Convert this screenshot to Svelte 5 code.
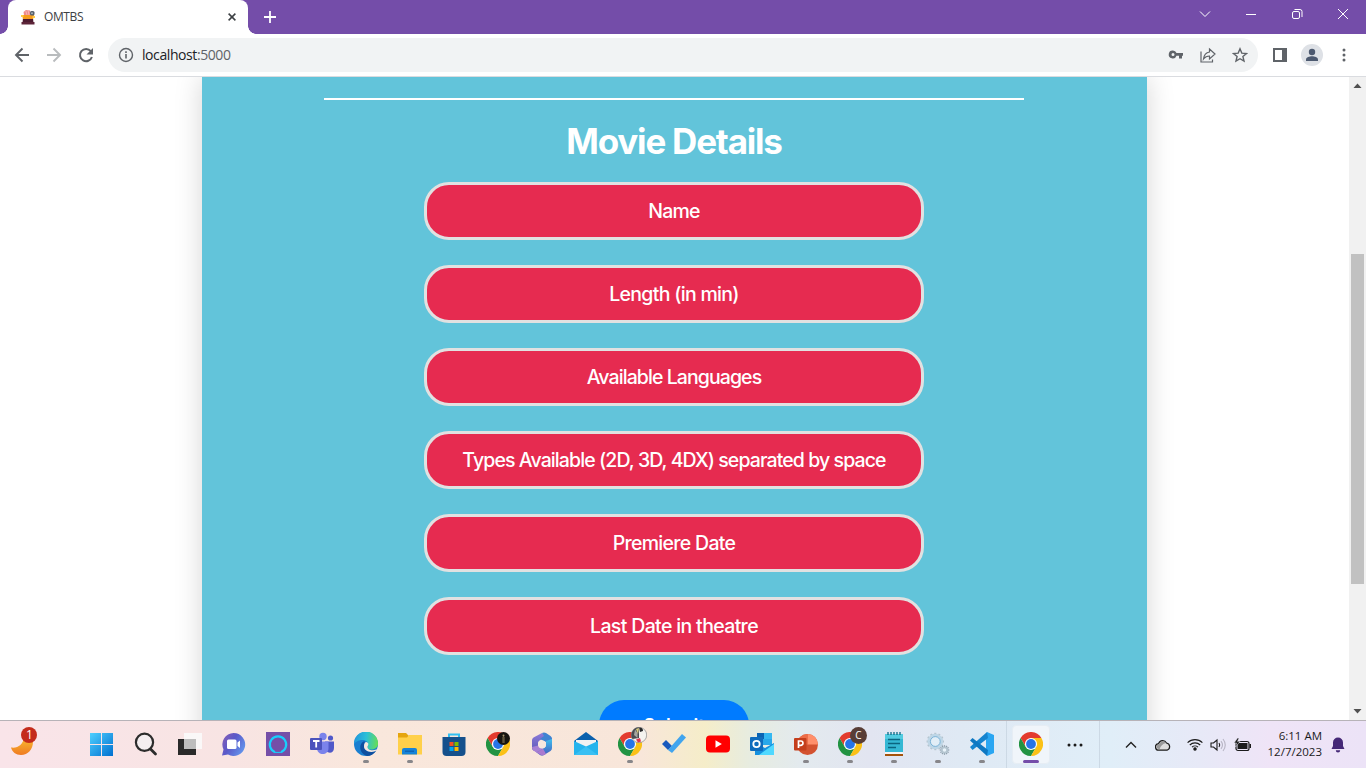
<script>
  const fields = [
    { label: 'Name', spacing: -0.8 },
    { label: 'Length (in min)', spacing: -0.7 },
    { label: 'Available Languages', spacing: -0.92 },
    { label: 'Types Available (2D, 3D, 4DX) separated by space', spacing: -0.9 },
    { label: 'Premiere Date', spacing: -0.7 },
    { label: 'Last Date in theatre', spacing: -0.65 }
  ];
  const apps = [
    { id: 'start' }, { id: 'search' }, { id: 'tasks' }, { id: 'chat' }, { id: 'alexa' },
    { id: 'teams' }, { id: 'edge', open: true }, { id: 'files', open: true }, { id: 'store' },
    { id: 'chrome', badge: 'dark' }, { id: 'm365' }, { id: 'mail' },
    { id: 'chrome', badge: 'photo', open: true }, { id: 'todo' }, { id: 'youtube' },
    { id: 'outlook' }, { id: 'ppt', open: true }, { id: 'chrome', badge: 'c', open: true },
    { id: 'notepad', open: true }, { id: 'services', open: true }, { id: 'code', open: true }
  ];
  const teeth = [0, 30, 60, 90, 120, 150, 180, 210, 240, 270, 300, 330];
</script>

{#snippet chromeLogo()}
  <path d="M1.600 6A12 12 0 0 1 22.400 6H12L6.800 15z" fill="#e33b2e" />
  <path d="M1.600 6A12 12 0 0 0 12 24l5.200-9L12 12l-5.200 3z" fill="#229342" />
  <path d="M12 24A12 12 0 0 0 22.400 6H12l5.200 9z" fill="#fbc116" />
  <circle cx="12" cy="12" r="6.100" fill="#fff" />
  <circle cx="12" cy="12" r="4.900" fill="#2674e8" />
{/snippet}

<div class="screen">
  <header class="tabs">
    <div class="tab">
      <svg width="16" height="16" viewBox="0 0 16 16">
        <path d="M3 9h10l.5 5h-11z" fill="#4d1b30" />
        <path d="M1.500 13h13v2.500h-13z" fill="#5d2438" />
        <path d="M2 6h12l-1 4H3z" fill="#f79b1c" />
        <path d="M1 6h2.500v2H1zM12.500 7H15v2h-2.500z" fill="#ffcc43" />
        <path d="M3.500 3 6 1l4 .5 1 4.500H4z" fill="#ef8a8c" />
        <path d="M5.500 1 7 6M8 1l1 5" stroke="#f6b5b3" />
        <rect x="10" y="2" width="4.500" height="4.500" rx="1.500" fill="#58616b" /><circle cx="12" cy="4.200" r="1" fill="#a6b0b8" />
      </svg>
      <span>OMTBS</span>
      <svg class="close" width="8" height="8" viewBox="0 0 8 8"><path d="M.6.6 7.400 7.400M7.400.6.6 7.400" stroke="#3c4043" stroke-width="1.500" /></svg>
    </div>
    <svg class="plus" width="12" height="12" viewBox="0 0 12 12"><path d="M6 0v12M0 6h12" stroke="#fff" stroke-width="1.800" /></svg>
    <div class="win">
      <svg width="46" height="28" viewBox="0 0 46 28"><path d="M18 11.500l5 5 5-5" /></svg>
      <svg width="46" height="28" viewBox="0 0 46 28"><path d="M18 14.500h10" /></svg>
      <svg width="46" height="28" viewBox="0 0 46 28"><rect x="18.500" y="11.500" width="7" height="7" rx="1.500" /><path d="M20.500 9.500h5.500a2 2 0 0 1 2 2v5.500" /></svg>
      <svg width="46" height="28" viewBox="0 0 46 28"><path d="M18 9l10 10M28 9 18 19" /></svg>
    </div>
  </header>

  <div class="toolbar">
    <svg width="32" height="32" viewBox="0 0 32 32" fill="none" stroke="#5f6368" stroke-width="1.900"><path d="M23 16H10.500M16.500 9.500 10 16l6.500 6.500" /></svg>
    <svg width="32" height="32" viewBox="0 0 32 32" fill="none" stroke="#b9bcbe" stroke-width="1.900"><path d="M9 16h12.500M15.500 9.500 22 16l-6.500 6.500" /></svg>
    <svg width="32" height="32" viewBox="0 0 32 32" fill="none" stroke="#5f6368" stroke-width="2"><path d="M20.800 12.200A6.100 6.100 0 1 0 21.900 18" /><path d="M23 9v6.500h-6.500z" fill="#5f6368" stroke="none" /></svg>
    <div class="omnibox">
      <svg width="16" height="16" viewBox="0 0 16 16"><circle cx="8" cy="8" r="6.500" fill="none" stroke="#5f6368" stroke-width="1.400" /><path d="M7.200 7h1.600v4.500H7.200zM7.200 4.300h1.600v1.600H7.200z" fill="#5f6368" /></svg>
      <span class="url">localhost<i>:5000</i></span>
      <div class="actions">
        <svg width="16" height="16" viewBox="0 0 16 16"><path fill-rule="evenodd" d="M5 3.500a4 4 0 1 0 3.500 5.300H11V11.500h3V8.800h1V6H8.500A4 4 0 0 0 5 3.500zM5 6a1.500 1.500 0 1 1 0 3 1.500 1.500 0 0 1 0-3z" fill="#5f6368" /></svg>
        <svg width="16" height="16" viewBox="0 0 16 16" fill="none" stroke="#5f6368" stroke-width="1.200"><path d="M1 4.500V15h11.500v-2.500" /><path d="M9.500 2 15 7l-5.500 5V9C6.500 9 5 10 3.500 12 4 8 6 5.500 9.500 5z" /></svg>
        <svg width="16" height="16" viewBox="0 0 16 16"><path d="M8 1.800l1.800 4.300 4.700.4-3.600 3 1.100 4.600L8 11.700l-4 2.400 1.100-4.600-3.600-3 4.700-.4z" fill="none" stroke="#5f6368" stroke-width="1.400" /></svg>
      </div>
    </div>
    <div class="menu">
      <svg width="14" height="14" viewBox="0 0 14 14"><path fill-rule="evenodd" d="M0 0h14v14H0zM2 2v10h7V2z" fill="#5f6368" /></svg>
      <svg width="22" height="22" viewBox="0 0 22 22"><circle cx="11" cy="11" r="11" fill="#dee1e6" /><circle cx="11" cy="8" r="3.200" fill="#4d5a70" /><path d="M5 17v-1.500c0-2 3.500-3.200 6-3.200s6 1.200 6 3.200V17z" fill="#4d5a70" /></svg>
      <svg width="4" height="14" viewBox="0 0 4 14" fill="#5f6368"><circle cx="2" cy="2" r="1.500" /><circle cx="2" cy="7" r="1.500" /><circle cx="2" cy="12" r="1.500" /></svg>
    </div>
  </div>

  <div class="viewport">
    <main class="card">
      <hr />
      <h1>Movie Details</h1>
      <form>
        {#each fields as f}
          <div class="field"><span style="letter-spacing: {f.spacing}px">{f.label}</span></div>
        {/each}
      </form>
      <button type="button">Submit</button>
    </main>
    <div class="scroll">
      <svg width="17" height="17" viewBox="0 0 17 17"><path d="M4.500 11h8l-4-4.500z" fill="#505050" /></svg>
      <div class="thumb"></div>
      <svg width="17" height="17" viewBox="0 0 17 17"><path d="M4.500 6h8l-4 4.500z" fill="#505050" /></svg>
    </div>
  </div>

  <footer class="taskbar">
    <div class="weather">
      <svg width="30" height="30" viewBox="0 0 30 30">
        <defs><linearGradient id="moon" x1="0" y1="0" x2="0" y2="1"><stop offset="0" stop-color="#f9bd30" /><stop offset="1" stop-color="#ef7b22" /></linearGradient></defs>
        <path d="M1 20.500c7 1 12-3 13-10 2-1 8 0 9 4 0 8-5 13.500-12 13.500-5 0-9-3-10-7.500z" fill="url(#moon)" />
        <circle cx="19" cy="8" r="8" fill="#c42b1c" />
      </svg>
      <b>1</b>
    </div>
    <div class="apps">
      {#each apps as a}
        <div class="app" class:open={a.open}>
          <svg width="24" height="24" viewBox="0 0 24 24">
            {#if a.id === 'start'}
              <defs><linearGradient id="win" gradientUnits="userSpaceOnUse" x1="0" y1="1" x2="23" y2="24"><stop offset="0" stop-color="#4fd0ff" /><stop offset="1" stop-color="#0070d0" /></linearGradient></defs>
              <path d="M0 1h11v11H0zM12 1h11v11H12zM0 13h11v11H0zM12 13h11v11H12z" fill="url(#win)" />
            {:else if a.id === 'search'}
              <circle cx="10.500" cy="10.300" r="8.600" fill="#f4eef0" stroke="#2c2c2c" stroke-width="2.200" /><path d="M16.500 17l5 5" stroke="#2c2c2c" stroke-width="2.800" stroke-linecap="round" />
            {:else if a.id === 'tasks'}
              <path d="M0 7h18v16H0z" fill="#2a2a2a" /><path d="M6 1h18v16H6z" fill="#fafafa" opacity=".9" /><path d="M6 7h12v10H6z" fill="#bdbdbd" />
            {:else if a.id === 'chat'}
              <defs><linearGradient id="cht" x1="0" y1="0" x2="1" y2=".6"><stop offset="0" stop-color="#8a5fb5" /><stop offset=".5" stop-color="#5a59c9" /><stop offset="1" stop-color="#6291ea" /></linearGradient></defs>
              <path d="M11.500 1A11.500 11.500 0 1 1 6 22.500L0 23.500l1.500-6A11.500 11.500 0 0 1 11.500 1z" fill="url(#cht)" /><rect x="5" y="7.500" width="9.500" height="9.500" rx="1.500" fill="#fff" /><path d="M15.500 10.500 18 8.500v7.500l-2.500-2z" fill="#fff" />
            {:else if a.id === 'alexa'}
              <path d="M0 0h24v24H0z" fill="#754fa8" /><path d="M9 20.200A8.200 8.200 0 1 1 15 20.200" fill="none" stroke="#18cffc" stroke-width="2.200" /><path d="M9 20.400h6" stroke="#18cffc" fill="none" />
            {:else if a.id === 'teams'}
              <circle cx="13" cy="4.500" r="3.700" fill="#7b83eb" /><circle cx="20.500" cy="6" r="2.600" fill="#5059c9" /><path d="M15 9.500h9V16c0 5-5 6-8 3z" fill="#5059c9" /><path d="M7 9.500h11.500V16c0 8-11.500 8-11.500 0z" fill="#7b83eb" /><rect y="6" width="12" height="12" rx="1" fill="#4b53bc" /><path d="M3 9h6.500M6.200 9v6.500" stroke="#fff" stroke-width="1.800" />
            {:else if a.id === 'edge'}
              <defs>
                <linearGradient id="ed" x1="0" y1=".3" x2="1" y2=".4"><stop offset="0" stop-color="#2196dc" /><stop offset=".5" stop-color="#2bbfd8" /><stop offset="1" stop-color="#66dd58" /></linearGradient>
              </defs>
              <circle cx="12" cy="12" r="12" fill="#1a7fd0" />
              <path d="M0 12A12 12 0 0 1 24 11c.5 4-3 6.500-7 6.500-3 0-4.500-1.500-3.500-3C15.500 11 12.500 8 8.500 8 4 8 1 10.500 0 12z" fill="url(#ed)" />
              <path d="M10.500 9C4 11 5 22 13 23.900c3.500 0 7-2 9-5C15 22 9 18 10.500 13z" fill="#0f4f9f" />
              <path d="M12 10c3 .5 2.700 2.700 1.500 4.500C13 18 18 19.300 22.500 17.500c.5 0 .5.500 0 1C18 21.500 9.500 19.500 10 14c0-2 .8-3.500 2-4z" fill="#f7e8df" />
            {:else if a.id === 'files'}
              <path d="M0 1h8l3 3h13v18H0z" fill="#e5a50f" /><path d="M0 5.500h9L11 3h13v19.500H0z" fill="#ffd04a" /><path d="M4 22.500V18q0-2 2-2h11q2 0 2 2v4.500z" fill="#1683d8" /><path d="M7 18.500h9v1.500H7z" fill="#0f64b5" />
            {:else if a.id === 'store'}
              <path d="M7 6V2.500h10V6" fill="none" stroke="#31bff2" stroke-width="2" /><path d="M.5 5h23v15q0 4-4 4h-15q-4 0-4-4z" fill="#15508c" /><path d="M7.500 10h4v4h-4z" fill="#f25022" /><path d="M12.500 10h4v4h-4z" fill="#7fba00" /><path d="M7.500 15h4v4h-4z" fill="#00a4ef" /><path d="M12.500 15h4v4h-4z" fill="#ffb900" />
            {:else if a.id === 'chrome'}
              {@render chromeLogo()}
            {:else if a.id === 'm365'}
              <defs><linearGradient id="ma" x1="0" y1="0" x2="0" y2="1"><stop offset="0" stop-color="#8d7bd9" /><stop offset="1" stop-color="#5a57b8" /></linearGradient><linearGradient id="mb" x1="0" y1="0" x2="0" y2="1"><stop offset="0" stop-color="#3ec0ee" /><stop offset="1" stop-color="#4659bd" /></linearGradient></defs>
              <path d="M12 1 3.500 5.500Q2 6.500 2 8v8q0 1.500 1.500 2.500L8 20.500V11q0-1.500 1.500-2.500L16 5z" fill="url(#ma)" />
              <path d="M12 1q2-1 4 0l4.500 3q1.500 1 1.500 2.500V13l-6-3-6-3 4-3z" fill="#3f83d2" />
              <path d="M22 7v9q0 2-1.500 3L14 23q-2 1-4 0l-4-3 8.500-4.500Q16 15 16 13V9z" fill="url(#mb)" />
              <path d="M2 15l6-1.500 5 3-6.500 4-3-2Q2 17.500 2 15z" fill="#a780d4" /><path d="M6.500 20.500l6.500-4 3 5.500q-3 2-5 1z" fill="#aa7ad0" />
              <circle cx="12" cy="12.500" r="3.900" fill="#f6e8df" />
            {:else if a.id === 'mail'}
              <path d="M0 9 12 0l12 9v2H0z" fill="#0a60ad" /><path d="M2 8h20v9H2z" fill="#f2f2f2" /><path d="M0 9l12 5.500L24 9v14H0z" fill="#25b4ed" /><path d="M0 23l12-8.500L24 23z" fill="#39c0f3" />
            {:else if a.id === 'todo'}
              <path d="M0 12l4-4 6 6-4 4z" fill="#185abd" /><path d="M6 18 20 2l4 3.500L10 21z" fill="#41a5ee" />
            {:else if a.id === 'youtube'}
              <rect y="3.500" width="24" height="17" rx="4" fill="#f00" /><path d="M9.500 8.200v7.600l6.300-3.800z" fill="#fff" />
            {:else if a.id === 'outlook'}
              <path d="M7 1h15v12H7z" fill="#28a8ea" /><path d="M7 1h7v6H7z" fill="#0a64b4" /><path d="M14 1h8v6h-8z" fill="#35b8f1" /><path d="M5 11l10 5 9-5v12H5z" fill="#1490df" /><path d="M9 23l15-11v11z" fill="#50d9ff" /><rect y="5" width="13" height="14" rx="1" fill="#0f6cbd" /><circle cx="6.500" cy="12" r="3.200" fill="none" stroke="#fff" stroke-width="1.800" />
            {:else if a.id === 'ppt'}
              <circle cx="13.500" cy="12.500" r="10.500" fill="#d35230" /><path d="M13.500 2A10.500 10.500 0 0 1 24 12.500H13.500z" fill="#ff8f6b" /><path d="M3 12.500A10.500 10.500 0 0 1 13.500 2v10.500z" fill="#ed6c47" /><rect y="6" width="12.500" height="12.500" rx="1" fill="#c43e1c" /><path d="M4.500 16V9h2.300a2 2 0 0 1 0 4.300H4.500" fill="none" stroke="#fff" stroke-width="1.700" />
            {:else if a.id === 'notepad'}
              <path d="M3 2h18v19H3z" fill="#35b8d4" /><path d="M3 2h18v5H3z" fill="#53cbe0" /><path d="M6 0v3M9 0v3M12 0v3M15 0v3M18 0v3" stroke="#0b6a85" stroke-width="1.300" /><path d="M6 7.500h12M6 11.500h12M6 15.500h8" stroke="#0b6580" stroke-width="1.500" /><path d="M3 20h18v2H3z" fill="#f5f5f5" /><path d="M3 22h18v2H3z" fill="#a4530b" />
            {:else if a.id === 'services'}
              {#each teeth as t}<path d="M8.300.8h2V4h-2z" fill="#b3c2cc" transform="rotate({t} 9.300 9.500)" />{/each}
              <circle cx="9.300" cy="9.500" r="6.300" fill="none" stroke="#bed6e6" stroke-width="3" /><circle cx="9.300" cy="9.500" r="4.900" fill="#e2eef7" stroke="#62a6d0" stroke-width=".8" />
              {#each teeth as t}<path d="M17.900 13.200h1.200v2h-1.200z" fill="#8d9daa" transform="rotate({t} 18.500 18)" />{/each}
              <circle cx="18.500" cy="18" r="2.700" fill="#e9f3fa" stroke="#b4c5d0" stroke-width="1.800" />
            {:else if a.id === 'code'}
              <path d="M17 0l7 3v18l-7 3-1-5V5z" fill="#2aa6f2" /><path d="M17 0 0 15l2.500 3L18 6z" fill="#1684cf" /><path d="M0 8.500 2.500 6 18 18l-1 6z" fill="#0f78c2" />
            {/if}
          </svg>
          {#if a.badge === 'c'}
            <span class="badge c">C</span>
          {:else if a.badge === 'dark'}
            <svg class="badge dark" width="13" height="13" viewBox="0 0 13 13"><circle cx="6.500" cy="6.500" r="6.500" fill="#17150f" /><path d="M5.300 11V5.500l1.200-2 1.200 2V11z" fill="#5f553c" /><circle cx="6.500" cy="3.600" r="1" fill="#a8966f" /></svg>
          {:else if a.badge === 'photo'}
            <svg class="badge photo" width="16" height="16" viewBox="0 0 16 16"><circle cx="8" cy="8" r="7.700" fill="#f5f3ef" stroke="#77777a" stroke-width=".6" /><path d="M8 .3A7.700 7.700 0 0 0 1.500 12L8 11V6z" fill="#4a4c52" /><path d="M4 2.500 6.500 6v5L3 8z" fill="#a6a5a0" /><path d="M5 2 8 1l-1 6z" fill="#d8ca7c" /><path d="M8 .5Q12 0 12 4L9 5z" fill="#29292b" /><path d="M5 12.500l4-1.500 1 3.500-3 1z" fill="#e03450" /></svg>
          {/if}
        </div>
      {/each}
    </div>
    <div class="group">
      <div class="active"><svg width="24" height="24" viewBox="0 0 24 24">{@render chromeLogo()}</svg></div>
      <svg width="16" height="4" viewBox="0 0 16 4" fill="#1b1b1b"><circle cx="2" cy="2" r="1.500" /><circle cx="8" cy="2" r="1.500" /><circle cx="14" cy="2" r="1.500" /></svg>
    </div>
    <div class="tray">
      <svg class="up" width="12" height="8" viewBox="0 0 12 8"><path d="M1 6.500l5-5 5 5" fill="none" stroke="#222" stroke-width="1.400" /></svg>
      <svg class="cloud" width="16" height="12" viewBox="0 0 16 12"><path d="M4 11.200a3.300 3.300 0 0 1-.4-6.600A4.300 4.300 0 0 1 11.500 4a3.700 3.700 0 0 1 .5 7.200z" fill="#ddd" stroke="#1b1b1b" stroke-width="1.200" /><path d="M1.500 9Q1 6 4 5.300 7-.5 11 4 6 5 4.500 10.500z" fill="#999" /></svg>
      <svg class="wifi" width="16" height="13" viewBox="0 0 16 13" fill="none" stroke="#1b1b1b" stroke-width="1.100"><path d="M.6 4.700a10.500 10.500 0 0 1 14.800 0M2.800 7a7.400 7.400 0 0 1 10.400 0M5 9.200a4.300 4.300 0 0 1 6 0" /><circle cx="8" cy="11" r="1.200" fill="#1b1b1b" /></svg>
      <svg class="vol" width="17" height="14" viewBox="0 0 17 14" fill="none" stroke="#1b1b1b" stroke-width="1.100"><path d="M1 5v4h2.500L7 12V2L3.500 5z" /><path d="M9 5q1.500 2 0 4" /><path d="M11 3.200q3 3.800 0 7.600M13 1q4.500 6 0 12" stroke="#b8b5c4" /></svg>
      <svg class="bat" width="18" height="14" viewBox="0 0 18 14"><rect x="2" y="3.500" width="13" height="9" rx="2" fill="none" stroke="#1b1b1b" stroke-width="1.200" /><path d="M3.500 5h10v6h-10zM15.500 6h1.500v4h-1.500z" fill="#1b1b1b" /><path d="M3.500 0 0 5h2.500L1.500 9 6 3.500H3.500L5 0z" fill="#1b1b1b" stroke="#ebe8f6" stroke-width=".5" /></svg>
      <div class="clock"><span>6:11 AM</span><span>12/7/2023</span></div>
      <svg class="bell" width="14" height="16" viewBox="0 0 14 16"><path d="M7 .5a5 5 0 0 1 5 5V9l1.500 3H.5L2 9V5.500a5 5 0 0 1 5-5zM4.800 13.200h4.400a2.200 2.200 0 0 1-4.400 0z" fill="#452877" /></svg>
    </div>
  </footer>
</div>

<style>
  :global(body) { overflow: hidden; }
  .screen { width: 1366px; height: 768px; display: flex; flex-direction: column; background: #fff; overflow: hidden; font-family: "Open Sans", sans-serif; }
  .screen * { box-sizing: border-box; }
  svg { display: block; flex: none; }
  .tabs { height: 34px; flex: none; background: #744da9; display: flex; padding-left: 8px; }
  .tab { width: 240px; height: 34px; background: #fff; border-radius: 8px 8px 0 0; display: flex; align-items: center; padding: 0 12px; position: relative; font-size: 12px; color: #3c4043; }
  .tab::before, .tab::after { content: ""; position: absolute; bottom: 0; width: 8px; height: 8px; }
  .tab::before { left: -8px; background: radial-gradient(circle at 0 0, #744da9 7.500px, #fff 8px); }
  .tab::after { right: -8px; background: radial-gradient(circle at 100% 0, #744da9 7.500px, #fff 8px); }
  .tab span { margin-left: 8px; letter-spacing: -.4px; padding-bottom: 2px; }
  .close { margin-left: auto; }
  .plus { margin: 11px 0 0 16px; }
  .win { display: flex; margin-left: auto; }
  .win path, .win rect { fill: none; stroke: #fff; stroke-width: 1; }
  .toolbar { height: 43px; flex: none; border-bottom: 1px solid #dadce0; display: flex; align-items: center; padding-left: 6px; }
  .omnibox { width: 1150px; height: 34px; margin-left: 6px; border-radius: 17px; background: #f1f3f4; display: flex; align-items: center; padding: 0 10px; }
  .url { margin-left: 8px; padding-bottom: 2px; font-size: 14px; letter-spacing: -.42px; color: #202124; }
  .url i { font-style: normal; color: #5f6368; }
  .actions { margin-left: auto; display: flex; gap: 16px; }
  .menu { display: flex; align-items: center; margin-left: 15px; }
  .menu svg + svg { margin-left: 14px; }
  .menu svg:last-child { margin-left: 19px; }
  .viewport { height: 643px; flex: none; display: flex; overflow: hidden; padding-left: 202px; }
  .card { width: 945px; height: 760px; background: #62c4da; box-shadow: 0 0 26px rgba(0, 0, 0, .17); display: flex; flex-direction: column; align-items: center; padding: 21px 1px 0 0; font-family: Inter, sans-serif; }
  hr { width: 700px; height: 2px; margin: 0; border: 0; background: #fff; flex: none; }
  h1 { margin: 19px 0 0; height: 44px; line-height: 44px; font-size: 35px; font-weight: 700; letter-spacing: -1.200px; color: #fff; }
  form { margin-top: 19px; display: flex; flex-direction: column; gap: 25px; }
  .field { width: 500px; height: 58px; border: 3px solid #e1e1e1; border-radius: 25px; background: #e62b50; color: #fff; font-size: 19.500px; font-weight: 500; display: flex; align-items: center; justify-content: center; white-space: nowrap; }
  button { margin-top: 45px; width: 150px; height: 50px; flex: none; border: 0; border-radius: 25px; padding: 0; background: #007bff; color: #fff; font: 600 18px Inter, sans-serif; }
  .scroll { width: 17px; height: 643px; margin-left: auto; background: #f1f1f1; display: flex; flex-direction: column; }
  .thumb { width: 13px; height: 330px; margin: 160px 0 119px 2px; background: #c1c1c1; }
  .taskbar { height: 48px; flex: none; border-top: 1px solid #b7b3b8; display: flex; background: linear-gradient(90deg, #f9e4e9 0, #f8e4e3 230px, #f9e7dc 370px, #f8e6da 640px, #f5edc9 705px, #e7ece0 750px, #e3eaee 800px, #e2e5f1 870px, #dfe9f4 960px, #e0eef8 1110px, #e7e9f7 1200px, #efe4f7 1270px, #ece3f7 1366px); }
  .weather { width: 80px; padding: 6px 0 0 10px; position: relative; }
  .weather b { position: absolute; left: 26px; top: 6px; font-size: 12px; line-height: 16px; font-weight: 400; color: #fff; }
  .apps { display: flex; }
  .app { width: 44px; height: 47px; display: flex; flex-direction: column; align-items: center; padding-top: 11px; position: relative; }
  .open::after { content: ""; width: 6px; height: 3px; border-radius: 2px; background: #87868a; margin-top: 4px; }
  .badge { position: absolute; }
  .dark { left: 21px; top: 11px; }
  .photo { left: 23px; top: 6px; }
  .c { width: 17px; height: 17px; left: 22px; top: 6px; border-radius: 50%; background: #583d36; color: #fff; font-size: 10px; line-height: 16px; text-align: center; }
  .group { margin-left: 2px; width: 94px; border-left: 1px solid #ccd9e5; border-right: 1px solid #ccd9e5; display: flex; align-items: center; gap: 17px; padding-left: 5px; }
  .active { width: 38px; height: 39px; border-radius: 4px; background: #f0f5fa; border: 1px solid #e6edf4; display: flex; flex-direction: column; align-items: center; padding-top: 6px; }
  .active::after { content: ""; flex: none; width: 16px; height: 3px; border-radius: 2px; background: #744da9; margin-top: 4px; }
  .tray { display: flex; align-items: center; flex: 1; }
  .up { margin-left: 25px; }
  .cloud { margin-left: 18px; }
  .wifi { margin-left: 16px; }
  .vol { margin-left: 7px; }
  .bat { margin-left: 7px; }
  .clock { width: 68px; margin: 0 0 2px 2px; display: flex; flex-direction: column; align-items: flex-end; font-size: 11.500px; line-height: 16px; color: #1b1b1b; }
  .bell { margin-left: 9px; }
</style>
